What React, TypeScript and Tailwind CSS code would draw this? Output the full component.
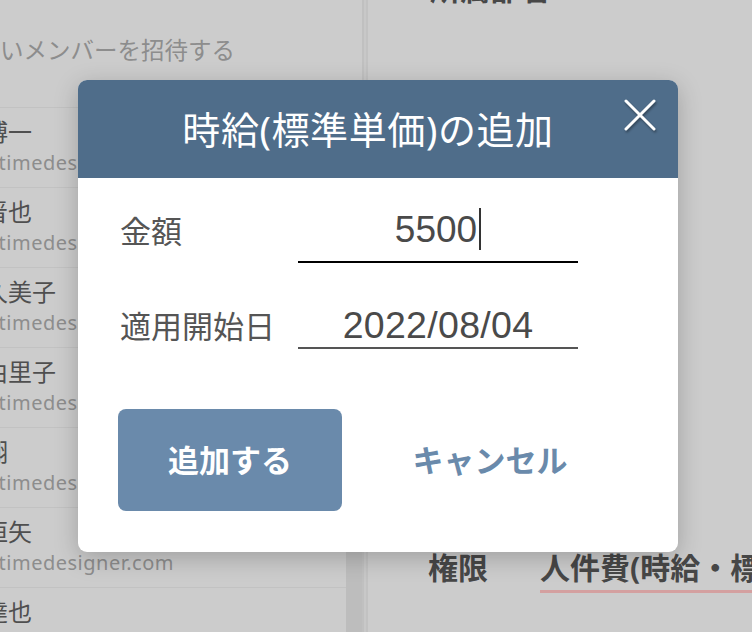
import React from "react";

const jp = { fontFamily: '"Noto Sans", "Noto Sans CJK JP", sans-serif' };
const num = { fontFamily: '"Liberation Sans", Arial, sans-serif' };

interface Member { name: string; email: string; }

const members: Member[] = [
  { name: "田中　博一", email: "h.tanaka@timedesigner.com" },
  { name: "山本　晋也", email: "s.yamamoto@timedesigner.com" },
  { name: "佐藤　久美子", email: "k.sato@timedesigner.com" },
  { name: "鈴木　由里子", email: "y.suzuki@timedesigner.com" },
  { name: "伊藤　翔", email: "s.ito@timedesigner.com" },
  { name: "斎藤　恒矢", email: "k.saito@timedesigner.com" },
  { name: "小林　達也", email: "t.kobayashi@timedesigner.com" },
];

function MemberList() {
  return (
    <div className="w-[346px] h-full overflow-hidden">
      <div className="-ml-[88px] w-[434px]">
        <div className="h-[107px] flex items-center pb-[6px] pl-[41px] text-[23.5px] text-[#8d8d8d] whitespace-nowrap">
          新しいメンバーを招待する
        </div>
        {members.map((m) => (
          <div key={m.email} className="h-[80px] border-t border-[#c2c2c2] pt-[8px]">
            <div className="text-[24px] leading-[32px] text-[#4f4f4f] whitespace-nowrap">{m.name}</div>
            <div className="w-[262px] flex justify-end mt-[2px]">
              <span className="text-[20px] leading-[26px] tracking-[0.5px] text-[#8d8d8d] whitespace-nowrap">{m.email}</span>
            </div>
          </div>
        ))}
      </div>
    </div>
  );
}

function CloseIcon() {
  return (
    <svg width="34" height="32" viewBox="0 0 34 32" className="drop-shadow-[1px_2px_1px_rgba(0,0,0,0.35)]">
      <path d="M3 2 L31 30 M31 2 L3 30" stroke="#fff" strokeWidth="3" strokeLinecap="round" />
    </svg>
  );
}

function AddRateDialog() {
  return (
    <div className="absolute left-[78px] top-[80px] w-[600px] h-[472px] bg-white rounded-[9px] overflow-hidden shadow-[0_6px_24px_rgba(0,0,0,0.22)]">
      <div className="relative h-[98px] bg-[#4f6d8a] flex items-center justify-center pr-[20px]">
        <span className="text-[38px] text-white tracking-[0.6px]">時給(標準単価)の追加</span>
        <button className="absolute right-[21px] top-[19px]">
          <CloseIcon />
        </button>
      </div>
      <div className="pt-[21px]">
        <div className="flex items-center h-[64px] pl-[42px]">
          <span className="w-[178px] text-[31px] text-[#555]">金額</span>
          <div className="w-[280px] h-full border-b-2 border-black flex items-center justify-center pb-[2px]">
            <span style={num} className="text-[37px] leading-none text-[#4a4a4a]">5500</span>
            <span className="inline-block w-[2px] h-[42px] bg-[#333] ml-[2px]" />
          </div>
        </div>
        <div className="flex items-center h-[48px] pl-[42px] mt-[38px]">
          <span className="w-[178px] text-[31px] text-[#555] whitespace-nowrap pt-[3px]">適用開始日</span>
          <div className="w-[280px] h-full border-b-2 border-[#555] flex items-end justify-center pb-[3px]">
            <span style={num} className="text-[37.5px] leading-none text-[#4a4a4a] tracking-[0.3px]">2022/08/04</span>
          </div>
        </div>
        <div className="flex pl-[40px] mt-[60px]">
          <button className="w-[224px] h-[102px] rounded-[8px] bg-[#6a8aab] text-white text-[31px] font-bold">
            追加する
          </button>
          <button className="w-[224px] h-[102px] ml-[36px] text-[#6a8aab] text-[31px] font-bold">
            キャンセル
          </button>
        </div>
      </div>
    </div>
  );
}

export default function App() {
  return (
    <div style={jp} className="relative w-[752px] h-[632px] overflow-hidden bg-[#cccccc] flex">
      <MemberList />
      <div className="w-[16px] h-full flex flex-col">
        <div className="h-[300px]" />
        <div className="flex-1 bg-[#bdbdbd]" />
      </div>
      <div className="w-[6px] h-full flex">
        <div className="w-[2px] bg-[#c0c0c0]" />
        <div className="w-[2px] bg-[#c8c8c8]" />
        <div className="w-[2px] bg-[#c2c2c2]" />
      </div>
      <div className="flex-1 h-full flex flex-col overflow-hidden">
        <div className="-mt-[34px] ml-[62px] text-[30px] font-bold text-[#474747] whitespace-nowrap">所属部署</div>
        <div className="mt-auto pb-[39px] flex items-end whitespace-nowrap text-[30px] font-bold text-[#474747]">
          <span className="ml-[60px] pb-[3px]">権限</span>
          <span className="ml-[52px] border-b-[3px] border-[#d4a0a0]">人件費(時給・標準単価)</span>
        </div>
      </div>
      <AddRateDialog />
    </div>
  );
}
